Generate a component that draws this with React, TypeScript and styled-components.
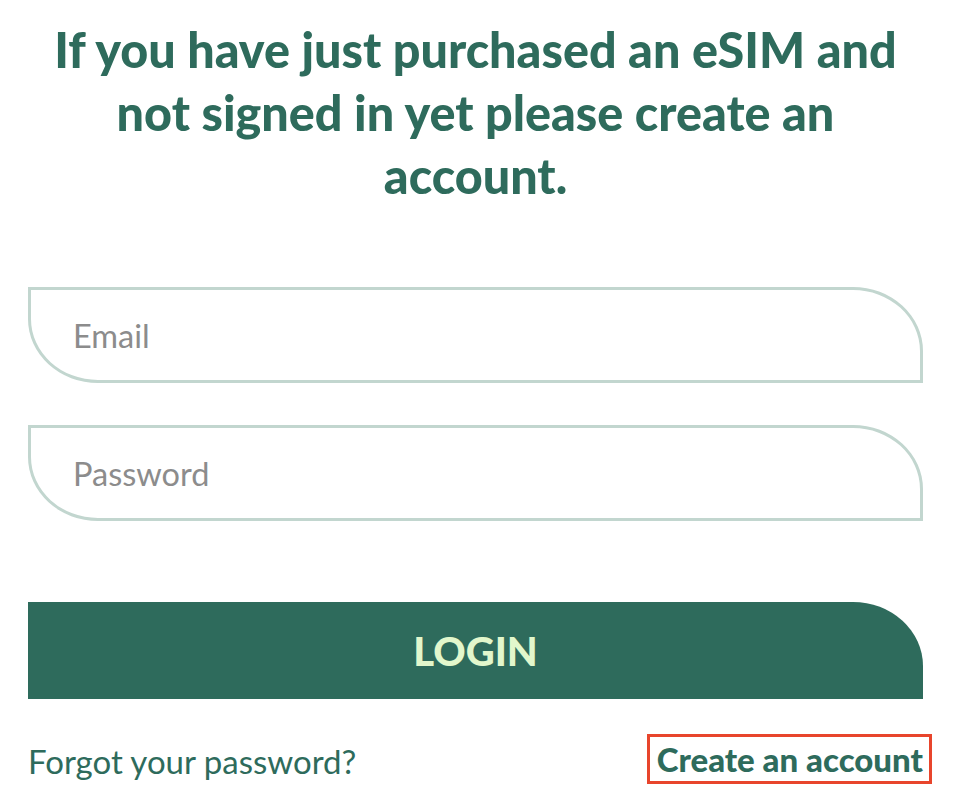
import React from "react";
import styled, { createGlobalStyle } from "styled-components";

const Global = createGlobalStyle`
  html, body { margin: 0; padding: 0; background: #ffffff; }
  body { font-family: "Lato", "Noto Sans", sans-serif; }
  * { box-sizing: border-box; }
`;

const Page = styled.div`
  width: 895px;
  margin-left: 28px;
  padding-top: 18px;
  display: flex;
  flex-direction: column;
`;

const Heading = styled.h1`
  margin: 0;
  text-align: center;
  color: #2e6b5c;
  font-family: "Lato", sans-serif;
  font-weight: 900;
  font-size: 48.5px;
  line-height: 63px;
  white-space: nowrap;
`;

const Form = styled.form`
  margin-top: 80px;
  display: flex;
  flex-direction: column;
  gap: 42px;
`;

const Field = styled.input`
  width: 100%;
  height: 96px;
  border: 3px solid #c2d6cf;
  border-radius: 0 70px 0 70px / 0 64px 0 64px;
  padding: 0 0 0 42px;
  font-family: "Lato", sans-serif;
  font-size: 32.5px;
  color: #333;
  outline: none;
  background: #fff;
  &::placeholder { color: #8c8c8c; }
`;

const LoginButton = styled.button`
  margin-top: 81px;
  width: 100%;
  height: 97px;
  border: none;
  background: #2e6b5c;
  border-radius: 0 70px 0 0 / 0 64px 0 0;
  color: #e2f7cc;
  font-family: "Lato", sans-serif;
  font-weight: 900;
  font-size: 40px;
  cursor: pointer;
`;

const Footer = styled.div`
  margin-top: 35px;
  display: flex;
  justify-content: space-between;
  align-items: center;
`;

const Forgot = styled.a`
  color: #2e6b5c;
  font-family: "Lato", sans-serif;
  font-size: 33px;
  text-decoration: none;
  padding-top: 4px;
`;

const Create = styled.a`
  display: inline-block;
  color: #2e6b5c;
  font-family: "Lato", sans-serif;
  font-weight: 900;
  font-size: 33px;
  line-height: 36px;
  text-decoration: none;
  padding: 4px 6px 4px 7px;
  border: 3px solid #e8452c;
  margin-right: -9px;
`;

export default function App() {
  return (
    <>
      <Global />
      <Page>
        <Heading>
          If you have just purchased an eSIM and
          <br />
          not signed in yet please create an
          <br />
          account.
        </Heading>
        <Form onSubmit={(e) => e.preventDefault()}>
          <Field type="email" placeholder="Email" />
          <Field type="password" placeholder="Password" />
        </Form>
        <LoginButton>LOGIN</LoginButton>
        <Footer>
          <Forgot href="#">Forgot your password?</Forgot>
          <Create href="#">Create an account</Create>
        </Footer>
      </Page>
    </>
  );
}
